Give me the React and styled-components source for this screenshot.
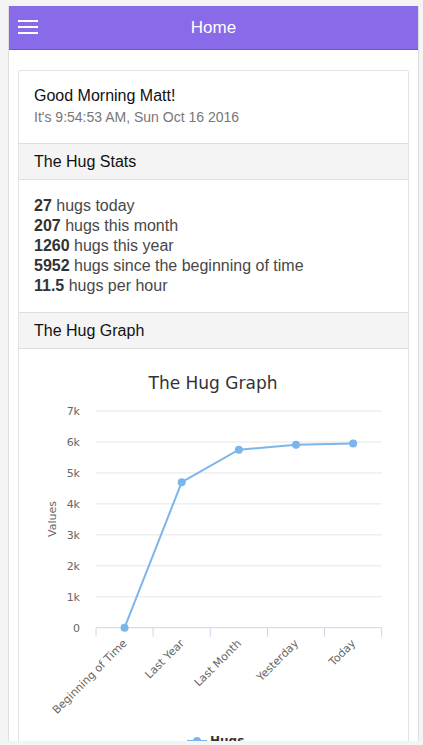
import React from 'react'
import styled, { createGlobalStyle } from 'styled-components'

const GlobalStyle = createGlobalStyle`
  html, body {
    margin: 0;
    padding: 0;
    background: #f4f4f4;
    font-family: "Liberation Sans", Arial, sans-serif;
  }
`

const Frame = styled.div`
  box-sizing: border-box;
  width: 411px;
  height: 735px;
  margin: 6px 0 0 8px;
  background: #fff;
  border-left: 1px solid #dedede;
  border-right: 1px solid #dedede;
  overflow: hidden;
`

const Bar = styled.header`
  position: relative;
  height: 43px;
  background: #896ae8;
  border-bottom: 1px solid #7254d4;
  display: flex;
  align-items: center;
  justify-content: center;
  color: #fff;
  font-size: 17px;
`

const Burger = styled.button`
  position: absolute;
  left: 9px;
  top: 14px;
  width: 20px;
  height: 14px;
  padding: 0;
  border: 0;
  background: transparent;
  display: flex;
  flex-direction: column;
  justify-content: space-between;
  span {
    display: block;
    height: 2px;
    background: #fff;
  }
`

const Content = styled.main`
  padding: 20px 9px 0 9px;
`

const Card = styled.section`
  border: 1px solid #e2e2e2;
  border-radius: 2px;
  background: #fff;
`

const Intro = styled.div`
  padding: 15px 15px 17px;
`

const Greeting = styled.div`
  font-size: 16px;
  line-height: 20px;
  color: #111;
`

const Clock = styled.div`
  margin-top: 2px;
  font-size: 14px;
  line-height: 18px;
  color: #777;
`

const SectionHead = styled.div`
  padding: 8px 15px 7px;
  line-height: 20px;
  font-size: 16px;
  color: #111;
  background: #f4f4f4;
  border-top: 1px solid #dedede;
  border-bottom: 1px solid #dedede;
`

const Stats = styled.ul`
  list-style: none;
  margin: 0;
  padding: 16px 15px;
  font-size: 16px;
  line-height: 20px;
  color: #484848;
  b {
    color: #333;
  }
`

const ChartBox = styled.div`
  display: flex;
`

const stats = [
  ['27', 'hugs today'],
  ['207', 'hugs this month'],
  ['1260', 'hugs this year'],
  ['5952', 'hugs since the beginning of time'],
  ['11.5', 'hugs per hour'],
]

const cats = ['Beginning of Time', 'Last Year', 'Last Month', 'Yesterday', 'Today']
const values = [0, 4700, 5750, 5910, 5952]

function HugChart() {
  // plot area, in page coordinates
  const left = 96
  const right = 381.7
  const base = 627.7
  const step = 30.95
  const slot = (right - left) / cats.length
  const yOf = (v) => base - (v / 1000) * step
  const xOf = (i) => left + slot * (i + 0.5)
  const pts = values.map((v, i) => `${xOf(i)},${yOf(v)}`).join(' ')
  const font = '"DejaVu Sans", "Liberation Sans", sans-serif'

  return (
    <svg width="388" height="400" viewBox="19 349 388 400" fontFamily={font}>
      <text x="213" y="389" textAnchor="middle" fontSize="17" fill="#333">
        The Hug Graph
      </text>
      {[1, 2, 3, 4, 5, 6, 7].map((k) => (
        <line key={k} x1={left} x2={right} y1={base - k * step} y2={base - k * step} stroke="#e6e6e6" />
      ))}
      {[0, 1, 2, 3, 4, 5, 6, 7].map((k) => (
        <text key={k} x="80" y={base - k * step + 4} textAnchor="end" fontSize="11" fill="#666">
          {k === 0 ? '0' : `${k}k`}
        </text>
      ))}
      <text x="56" y="519" fontSize="11" fill="#666" textAnchor="middle" transform="rotate(-90 56 519)">
        Values
      </text>
      <line x1={left} x2={right} y1={base} y2={base} stroke="#ccd6eb" />
      {[0, 1, 2, 3, 4, 5].map((i) => (
        <line key={i} x1={left + slot * i} x2={left + slot * i} y1={base} y2={base + 9} stroke="#ccd6eb" />
      ))}
      {cats.map((c, i) => {
        const x = xOf(i) + 3
        const y = 644
        return (
          <text key={c} x={x} y={y} textAnchor="end" fontSize="11" fill="#666" transform={`rotate(-45 ${x} ${y})`}>
            {c}
          </text>
        )
      })}
      <polyline points={pts} fill="none" stroke="#7cb5ec" strokeWidth="2" />
      {values.map((v, i) => (
        <circle key={i} cx={xOf(i)} cy={yOf(v)} r="4" fill="#7cb5ec" />
      ))}
      <line x1="187" x2="207" y1="741" y2="741" stroke="#7cb5ec" strokeWidth="2" />
      <circle cx="197" cy="741" r="4" fill="#7cb5ec" />
      <text x="210" y="745" fontSize="12" fontWeight="bold" fill="#333">
        Hugs
      </text>
    </svg>
  )
}

export default function App() {
  return (
    <>
      <GlobalStyle />
      <Frame>
        <Bar>
          <Burger aria-label="Menu">
            <span />
            <span />
            <span />
          </Burger>
          Home
        </Bar>
        <Content>
          <Card>
            <Intro>
              <Greeting>Good Morning Matt!</Greeting>
              <Clock>It's 9:54:53 AM, Sun Oct 16 2016</Clock>
            </Intro>
            <SectionHead>The Hug Stats</SectionHead>
            <Stats>
              {stats.map(([n, label]) => (
                <li key={label}>
                  <b>{n}</b> {label}
                </li>
              ))}
            </Stats>
            <SectionHead>The Hug Graph</SectionHead>
            <ChartBox>
              <HugChart />
            </ChartBox>
          </Card>
        </Content>
      </Frame>
    </>
  )
}
